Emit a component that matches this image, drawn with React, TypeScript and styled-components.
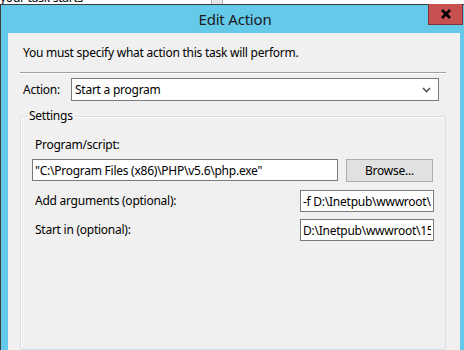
import React from 'react'
import styled, { createGlobalStyle } from 'styled-components'

const GlobalStyle = createGlobalStyle`
  html, body {
    margin: 0;
    padding: 0;
    background: #ffffff;
    overflow: hidden;
  }
  body {
    font-family: 'Noto Sans', 'Open Sans', sans-serif;
    font-size: 12px;
    letter-spacing: -0.25px;
    color: #000000;
  }
`

const Screen = styled.div`
  width: 464px;
  height: 350px;
  overflow: hidden;
  display: flex;
  flex-direction: column;
`

const BehindStrip = styled.div`
  height: 4px;
  overflow: hidden;
  display: flex;
  align-items: flex-end;
  flex-shrink: 0;
`

const BehindText = styled.span`
  font-size: 12px;
  line-height: 14px;
  margin-bottom: -1px;
  white-space: nowrap;
  color: #000;
`

const BehindScroll = styled.span`
  margin-left: 128px;
  width: 10px;
  height: 4px;
  background: #e6e6e6;
  border-left: 1px solid #b0b0b0;
  border-right: 1px solid #b0b0b0;
`

const Dialog = styled.div`
  position: relative;
  flex: 1;
  display: flex;
  flex-direction: column;
  background: #65c9ea;
  border-top: 1px solid #3d3d3d;
  border-left: 1px solid #3d3d3d;
  padding: 0 4px 0 7px;
`

const TitleBar = styled.div`
  height: 28px;
  display: flex;
  align-items: center;
  justify-content: center;
  flex-shrink: 0;
`

const Title = styled.h1`
  margin: 0 0 0 2px;
  font-size: 15px;
  font-weight: 400;
  letter-spacing: -0.2px;
  color: #1a1a1a;
  line-height: 20px;
`

const CloseButton = styled.button`
  position: absolute;
  top: -1px;
  right: 1px;
  width: 35px;
  height: 21px;
  padding: 0;
  display: flex;
  align-items: center;
  justify-content: center;
  background: #c75050;
  border: 1px solid #7c3434;
  border-top: none;
`

const Content = styled.div`
  flex: 1;
  background: #f0f0f0;
  padding: 0 14px 0 12px;
  display: flex;
  flex-direction: column;
`

const Intro = styled.p`
  margin: 12px 0 0;
  padding-left: 3px;
  line-height: 16px;
`

const Separator = styled.div`
  margin-top: 11px;
  height: 1px;
  background: #a0a0a0;
  border-bottom: 1px solid #ffffff;
`

const ActionRow = styled.div`
  margin-top: 4px;
  display: flex;
  align-items: center;
  padding: 0 7px 0 3px;
`

const ActionLabel = styled.label`
  width: 48px;
  line-height: 16px;
`

const Combo = styled.div`
  flex: 1;
  height: 23px;
  box-sizing: border-box;
  border: 1px solid #7a7a7a;
  background: #ffffff;
  display: flex;
  align-items: center;
  justify-content: space-between;
  padding: 0 7px 0 3px;
`

const Group = styled.fieldset`
  margin: 7px 0 0;
  padding: 13px 12px 0 11px;
  border: 1px solid #d5dfe5;
  border-radius: 3px;
  box-shadow: inset 1px 1px 0 #ffffff;
  flex: 1;
  display: flex;
  flex-direction: column;
  min-width: 0;
`

const Legend = styled.legend`
  margin-left: -5px;
  padding: 0 2px;
  line-height: 16px;
`

const FieldLabel = styled.label`
  padding-left: 3px;
  line-height: 16px;
`

const PathRow = styled.div`
  margin-top: 6px;
  display: flex;
  gap: 8px;
`

const TextBox = styled.input<{ $width: number }>`
  width: ${(p) => p.$width}px;
  height: 22px;
  box-sizing: border-box;
  border: 1px solid #7a7a7a;
  background: #ffffff;
  padding: 0 2px;
  margin: 0;
  font-family: inherit;
  font-size: 12px;
  letter-spacing: inherit;
  color: #000;
  outline: none;
`

const BrowseButton = styled.button`
  width: 87px;
  height: 23px;
  box-sizing: border-box;
  border: 1px solid #adadad;
  background: #e1e1e1;
  font-family: inherit;
  font-size: 12px;
  letter-spacing: inherit;
  color: #000;
  padding: 0;
`

const OptionRow = styled.div<{ $top: number }>`
  margin-top: ${(p) => p.$top}px;
  margin-right: -1px;
  display: flex;
  align-items: center;
  justify-content: space-between;
`

export default function App() {
  return (
    <>
      <GlobalStyle />
      <Screen>
        <BehindStrip>
          <BehindText>your task starts</BehindText>
          <BehindScroll />
        </BehindStrip>
        <Dialog>
          <TitleBar>
            <Title>Edit Action</Title>
          </TitleBar>
          <CloseButton aria-label='Close'>
            <svg width='12' height='10' viewBox='0 0 12 10'>
              <path d='M2 1 L10 9 M10 1 L2 9' stroke='#000' strokeWidth='2.6' strokeLinecap='butt' />
            </svg>
          </CloseButton>
          <Content>
            <Intro>You must specify what action this task will perform.</Intro>
            <Separator />
            <ActionRow>
              <ActionLabel>Action:</ActionLabel>
              <Combo>
                <span>Start a program</span>
                <svg width='9' height='6' viewBox='0 0 9 6'>
                  <path d='M1 1 L4.5 4.5 L8 1' stroke='#555' strokeWidth='1.6' fill='none' />
                </svg>
              </Combo>
            </ActionRow>
            <Group>
              <Legend>Settings</Legend>
              <FieldLabel>Program/script:</FieldLabel>
              <PathRow>
                <TextBox $width={306} readOnly value='"C:\Program Files (x86)\PHP\v5.6\php.exe"' />
                <BrowseButton>Browse...</BrowseButton>
              </PathRow>
              <OptionRow $top={8}>
                <FieldLabel>Add arguments (optional):</FieldLabel>
                <TextBox $width={134} readOnly value='-f D:\Inetpub\wwwroot\15G_cron\index.php' />
              </OptionRow>
              <OptionRow $top={7}>
                <FieldLabel>Start in (optional):</FieldLabel>
                <TextBox $width={134} readOnly value='D:\Inetpub\wwwroot\15G_cron' />
              </OptionRow>
            </Group>
          </Content>
        </Dialog>
      </Screen>
    </>
  )
}
